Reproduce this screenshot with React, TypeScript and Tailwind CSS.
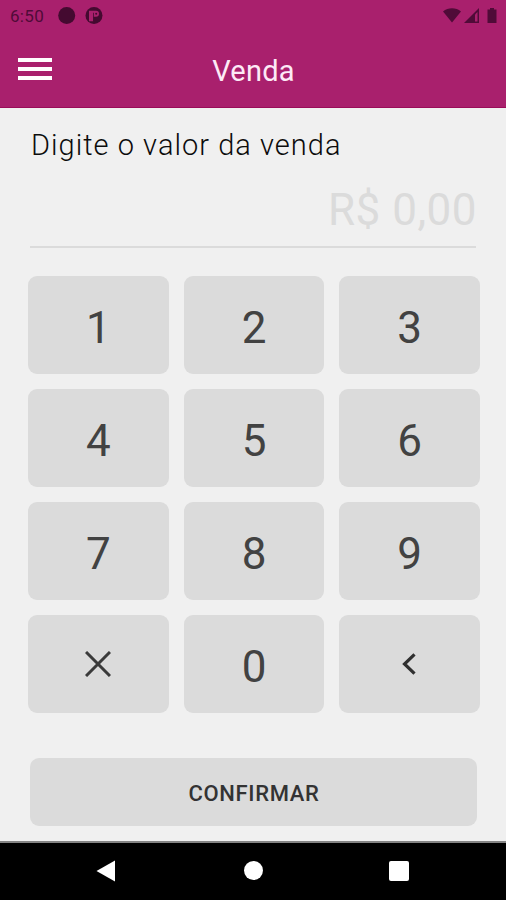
import React from "react";

function StatusBar() {
  return (
    <div className="flex h-8 items-center justify-between pl-[10px] pr-[7px] text-[#500b38]">
      <div className="flex items-center">
        <span className="w-[48px] text-[17px] leading-8 tracking-[0.3px]">6:50</span>
        <svg width="45" height="18" viewBox="0 0 45 18" fill="#440a30">
          <circle cx="8.7" cy="8.5" r="8.5" />
          <circle cx="36" cy="8.5" r="8.5" />
          <path d="M31 3.800h7a3 3 0 0 1 0 6H35.300v4.400H31z" fill="#a9206d" />
          <path d="M35 5.800h.8v8.500H35z" />
          <circle cx="38.200" cy="6.800" r="1" />
        </svg>
      </div>
      <svg width="56" height="18" viewBox="0 0 56 18" fill="#500b38">
        <path d="M0 4.5C5 .2 13 .2 18 4.5L9 15.5z" />
        <path d="M21 16 36 1v15z" />
        <path d="M32 7.5 34.5 5v9.5H32z" fill="#a9206d" />
        <path d="M44.5 2.5H47V1h4v1.500h2.500V16h-9z" />
      </svg>
    </div>
  );
}

function Header() {
  return (
    <header className="h-[108px] border-b border-[#9a0c59] bg-[#a9206d]">
      <StatusBar />
      <div className="grid h-[76px] grid-cols-[1fr_auto_1fr] items-center px-[18px]">
        <button aria-label="Menu" className="-mt-[2px] flex w-[34px] flex-col gap-[5px]">
          <span className="h-1 bg-white" />
          <span className="h-1 bg-white" />
          <span className="h-1 bg-white" />
        </button>
        <h1 className="pl-px pt-[2px] text-[29px] leading-9 tracking-[0.2px] text-[#fdeaf6]">Venda</h1>
      </div>
    </header>
  );
}

const keys = ["1", "2", "3", "4", "5", "6", "7", "8", "9", "clear", "0", "back"];

function KeyLabel({ value }: { value: string }) {
  if (value === "clear") {
    return (
      <svg width="26" height="26" viewBox="0 0 26 26" fill="none" stroke="#3a3a3a" strokeWidth="3">
        <path d="M1 1l24 24M25 1 1 25" />
      </svg>
    );
  }
  if (value === "back") {
    return (
      <svg className="mr-[2px]" width="14" height="22" viewBox="0 0 14 22" fill="none" stroke="#303030" strokeWidth="3.2">
        <path d="M12.500 1.300 2.500 11l10 9.700" />
      </svg>
    );
  }
  return <span className="pt-[5px]">{value}</span>;
}

export default function App() {
  return (
    <div className="flex h-[900px] w-[506px] flex-col overflow-hidden bg-[#f0f0f0] font-['Roboto',sans-serif]">
      <Header />
      <main className="flex-1 px-[28px]">
        <div className="mx-[2px] h-[140px] border-b-2 border-[#dbdbdb] pt-[19px]">
          <p className="pl-px text-[29px] font-light leading-9 tracking-[1.03px] text-[#0c0c0c]">Digite o valor da venda</p>
          <p className="-mr-px pt-[20px] text-right text-[44px] leading-[54px] tracking-[0.5px] text-[#dbdbdb]">R$ 0,00</p>
        </div>
        <div className="mt-[28px] grid w-[452px] grid-cols-3 gap-[15px]">
          {keys.map((key) => (
            <button
              key={key}
              aria-label={key}
              className="flex h-[98px] items-center justify-center rounded-[9px] bg-[#dbdbdb] text-[44px] leading-none text-[#424242]"
            >
              <KeyLabel value={key} />
            </button>
          ))}
        </div>
        <button className="mx-[2px] mt-[45px] block h-[68px] w-[447px] rounded-[9px] bg-[#dbdbdb] pl-px pt-[2px] text-[22px] font-medium tracking-[0.65px] text-[#333333]">
          CONFIRMAR
        </button>
      </main>
      <nav className="flex h-[59px] items-center border-t-2 border-[#858585] bg-black pb-[2px] pl-[96px]">
        <svg width="19" height="22" viewBox="0 0 19 22" fill="white">
          <path d="M.5 11 19 .5v21z" />
        </svg>
        <span className="ml-[129px] size-[19px] rounded-full bg-white" />
        <span className="ml-[126px] size-5 rounded-[2px] bg-white" />
      </nav>
    </div>
  );
}
